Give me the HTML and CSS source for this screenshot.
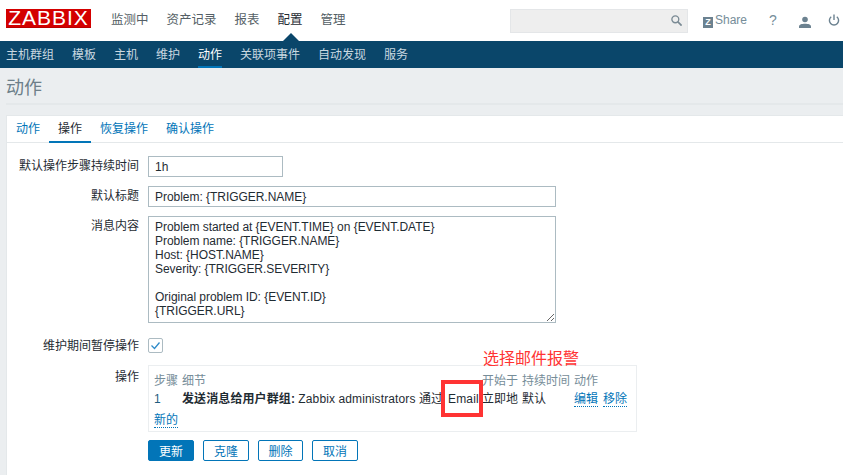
FILE: index.html
```html
<!DOCTYPE html>
<html lang="zh">
<head>
<meta charset="utf-8">
<title>动作</title>
<link rel="stylesheet" href="styles.css">
</head>
<body>
<header class="top">
  <div class="logo"><span>ZABBIX</span></div>
  <nav class="mainnav">
    <a>监测中</a><a>资产记录</a><a>报表</a><a class="on">配置</a><a>管理</a>
  </nav>
  <div class="search">
    <svg width="11" height="11" viewBox="0 0 14 14" class="searchicon"><circle cx="5.5" cy="5.5" r="4.4" fill="none" stroke="#7a8a94" stroke-width="1.7"/><path d="M8.5 8.5L13.5 13.5" stroke="#7a8a94" stroke-width="2.2"/></svg>
  </div>
  <div class="share">
    <span class="zbadge">Z</span><span class="sharetext">Share</span>
  </div>
  <span class="help">?</span>
  <svg class="user" width="12" height="12" viewBox="0 0 12 12"><circle cx="6" cy="3.5" r="2.8" fill="#6c8290"/><path d="M0 12V10.5C0 8.5 3 7.8 6 7.8S12 8.5 12 10.5V12Z" fill="#6c8290"/></svg>
  <svg class="power" width="12" height="12" viewBox="0 0 12 12"><path d="M3.2 2.8A4.6 4.6 0 1 0 8.8 2.8" fill="none" stroke="#6c8290" stroke-width="1.4"/><path d="M6 0.5V6" stroke="#6c8290" stroke-width="1.4"/></svg>
</header>
<nav class="subnav">
  <a>主机群组</a><a>模板</a><a>主机</a><a>维护</a><a class="on">动作</a><a>关联项事件</a><a>自动发现</a><a>服务</a>
</nav>
<main class="page">
  <h1 class="title">动作</h1>
  <section class="card">
    <div class="tabs">
      <a>动作</a><a class="on">操作</a><a>恢复操作</a><a>确认操作</a>
    </div>
    <form class="form">
      <label class="lab">默认操作步骤持续时间</label>
      <div class="field"><input class="inp short" value="1h"></div>
      <label class="lab">默认标题</label>
      <div class="field"><input class="inp long" value="Problem: {TRIGGER.NAME}"></div>
      <label class="lab">消息内容</label>
      <div class="field"><textarea class="area">Problem started at {EVENT.TIME} on {EVENT.DATE}
Problem name: {TRIGGER.NAME}
Host: {HOST.NAME}
Severity: {TRIGGER.SEVERITY}

Original problem ID: {EVENT.ID}
{TRIGGER.URL}</textarea></div>
      <label class="lab lab-check">维护期间暂停操作</label>
      <div class="field">
        <span class="check"><svg width="13" height="13" viewBox="0 0 13 13"><path d="M2.5 6.5L5.5 9.5L10.5 3.5" fill="none" stroke="#2e8bc9" stroke-width="1.3"/></svg></span>
      </div>
      <label class="lab lab-ops">操作</label>
      <div class="field">
        <div class="ops">
          <div class="ops-row ops-head">
            <span class="c1">步骤</span><span class="c2">细节</span><span class="c3">开始于</span><span class="c4">持续时间</span><span class="c5">动作</span>
          </div>
          <div class="ops-row">
            <span class="c1 num">1</span>
            <span class="c2"><b>发送消息给用户群组:</b> <span class="admin">Zabbix administrators</span> 通过<span class="email">Email</span></span>
            <span class="c3">立即地</span><span class="c4">默认</span>
            <span class="c5"><a class="dot">编辑</a><a class="dot">移除</a></span>
          </div>
          <div class="ops-new"><a class="dot">新的</a></div>
        </div>
      </div>
      <div class="lab"></div>
      <div class="field buttons">
        <button type="button" class="btn primary">更新</button>
        <button type="button" class="btn">克隆</button>
        <button type="button" class="btn narrow">删除</button>
        <button type="button" class="btn">取消</button>
      </div>
    </form>
  </section>
</main>
<div class="note">选择邮件报警</div>
<div class="notebox"></div>
</body>
</html>
```
FILE: styles.css
```css
* { box-sizing: border-box; }
html, body { margin: 0; padding: 0; }
body {
  width: 843px;
  height: 475px;
  overflow: hidden;
  position: relative;
  background: #ebeef0;
  font-family: "Liberation Sans", "Noto Sans CJK SC", sans-serif;
  font-size: 12px;
  color: #1f2c33;
}
a { text-decoration: none; color: inherit; }

.top {
  height: 41px;
  background: #fff;
  display: flex;
  align-items: flex-start;
  position: relative;
}
.logo {
  margin: 9px 0 0 6px;
  width: 85px;
  height: 19px;
  background: #d40000;
  border-bottom: 1px solid #b80000;
  color: #fff;
  text-align: center;
}
.logo span {
  display: block;
  font-size: 21px;
  line-height: 18px;
  letter-spacing: 1px;
}
.mainnav {
  display: flex;
  gap: 18px;
  margin: 12px 0 0 20px;
  font-size: 12.5px;
  line-height: 17px;
  color: #555f66;
}
.mainnav .on { color: #1f2c33; position: relative; }
.mainnav .on::after {
  content: "";
  position: absolute;
  left: 5px;
  top: 21px;
  border: 8px solid transparent;
  border-top: 0;
  border-bottom-color: #0a466a;
}
.search {
  position: absolute;
  left: 510px;
  top: 9px;
  width: 178px;
  height: 24px;
  background: #eeeeee;
  border: 1px solid #e4e6e8;
}
.searchicon { position: absolute; right: 5px; top: 5px; }
.share {
  position: absolute;
  left: 703px;
  top: 12px;
  display: flex;
  color: #768d99;
  line-height: 16px;
}
.zbadge {
  width: 10px;
  height: 11px;
  margin-top: 5px;
  background: #6c8290;
  color: #fff;
  font-size: 9px;
  font-weight: bold;
  line-height: 11px;
  text-align: center;
}
.sharetext { margin-left: 2px; }
.help {
  position: absolute;
  left: 769px;
  top: 12px;
  font-size: 14px;
  line-height: 16px;
  color: #768d99;
}
.user { position: absolute; left: 799px; top: 16px; }
.power { position: absolute; left: 828px; top: 14px; }

.subnav {
  height: 27px;
  background: #0a466a;
  display: flex;
  gap: 18px;
  padding: 6px 0 0 6px;
  color: #c9d8e0;
  line-height: 17px;
}
.subnav a { height: 21px; }
.subnav .on { color: #fff; border-bottom: 2px solid #0275b8; }

.page { padding: 0 0 0 6px; }
.title {
  margin: 0;
  height: 37px;
  border-bottom: 2px solid #e4e8ea;
  padding-top: 4px;
  font-weight: normal;
  font-size: 18px;
  line-height: 33px;
  color: #6d7f89;
}
.card {
  margin-top: 10px;
  height: 360px;
  background: #fff;
  border-top: 1px solid #e4e8ea;
  border-left: 1px solid #e4e8ea;
}
.tabs {
  height: 27px;
  display: flex;
  border-bottom: 1px solid #e4e8ea;
  line-height: 26px;
  color: #0275b8;
}
.tabs a { padding: 0 9px; height: 27px; }
.tabs .on { color: #1f2c33; border-bottom: 2px solid #0275b8; }

.form {
  display: grid;
  grid-template-columns: 132px 1fr;
  column-gap: 9px;
  padding-top: 13px;
}
.lab {
  text-align: right;
  line-height: 21px;
  color: #1f2c33;
}
.field { margin-bottom: 9px; }
.inp, .area {
  display: block;
  font-family: "Liberation Sans", "Noto Sans CJK SC", sans-serif;
  font-size: 12px;
  letter-spacing: -0.04px;
  color: #1f2c33;
  background: #fff;
  border: 1px solid #acbbc2;
  border-radius: 0;
  padding: 0 6px;
  outline: 0;
}
.inp { height: 21px; }
.short { width: 135px; }
.long { width: 408px; }
.area {
  width: 408px;
  height: 107px;
  padding: 3px 6px;
  line-height: 14px;
  overflow: hidden;
  margin-bottom: 6px;
}
.lab-check { line-height: 16px; }
.check {
  display: block;
  width: 15px;
  height: 15px;
  border: 1px solid #acbbc2;
  border-radius: 2px;
  margin-bottom: 3px;
  background: #fff;
}
.check svg { display: block; }
.lab-ops { line-height: 17px; padding-top: 4px; }
.ops {
  width: 489px;
  height: 67px;
  border: 1px solid #ebeef0;
  padding: 6px 5px 0;
  margin-bottom: -1px;
}
.ops-row {
  display: grid;
  grid-template-columns: 28px 300px 40px 52px 1fr;
  line-height: 18px;
  height: 20px;
  white-space: nowrap;
}
.ops-head { color: #768d99; height: 18px; }
.num { color: #1f5c80; }
.c2 b { font-weight: bold; letter-spacing: 0.1px; }
.admin { letter-spacing: 0.12px; }
.email { margin-left: 5px; letter-spacing: 0.2px; }
.dot {
  color: #0275b8;
  border-bottom: 1px dotted #0275b8;
  margin-right: 5px;
}
.ops-new { line-height: 17px; margin-top: 2px; }
.buttons { display: flex; gap: 9px; }
.btn {
  width: 46px;
  height: 21px;
  padding: 0;
  background: #fff;
  border: 1px solid #0275b8;
  border-radius: 2px;
  color: #0275b8;
  font-family: "Liberation Sans", "Noto Sans CJK SC", sans-serif;
  font-size: 12px;
}
.narrow { width: 45px; }
.primary { background: #0275b8; color: #fff; }

.note {
  position: absolute;
  left: 483px;
  top: 349px;
  font-size: 16px;
  line-height: 20px;
  color: #ff3333;
}
.notebox {
  position: absolute;
  left: 441px;
  top: 380px;
  width: 42px;
  height: 37px;
  border: 4px solid #ff3333;
}
```
